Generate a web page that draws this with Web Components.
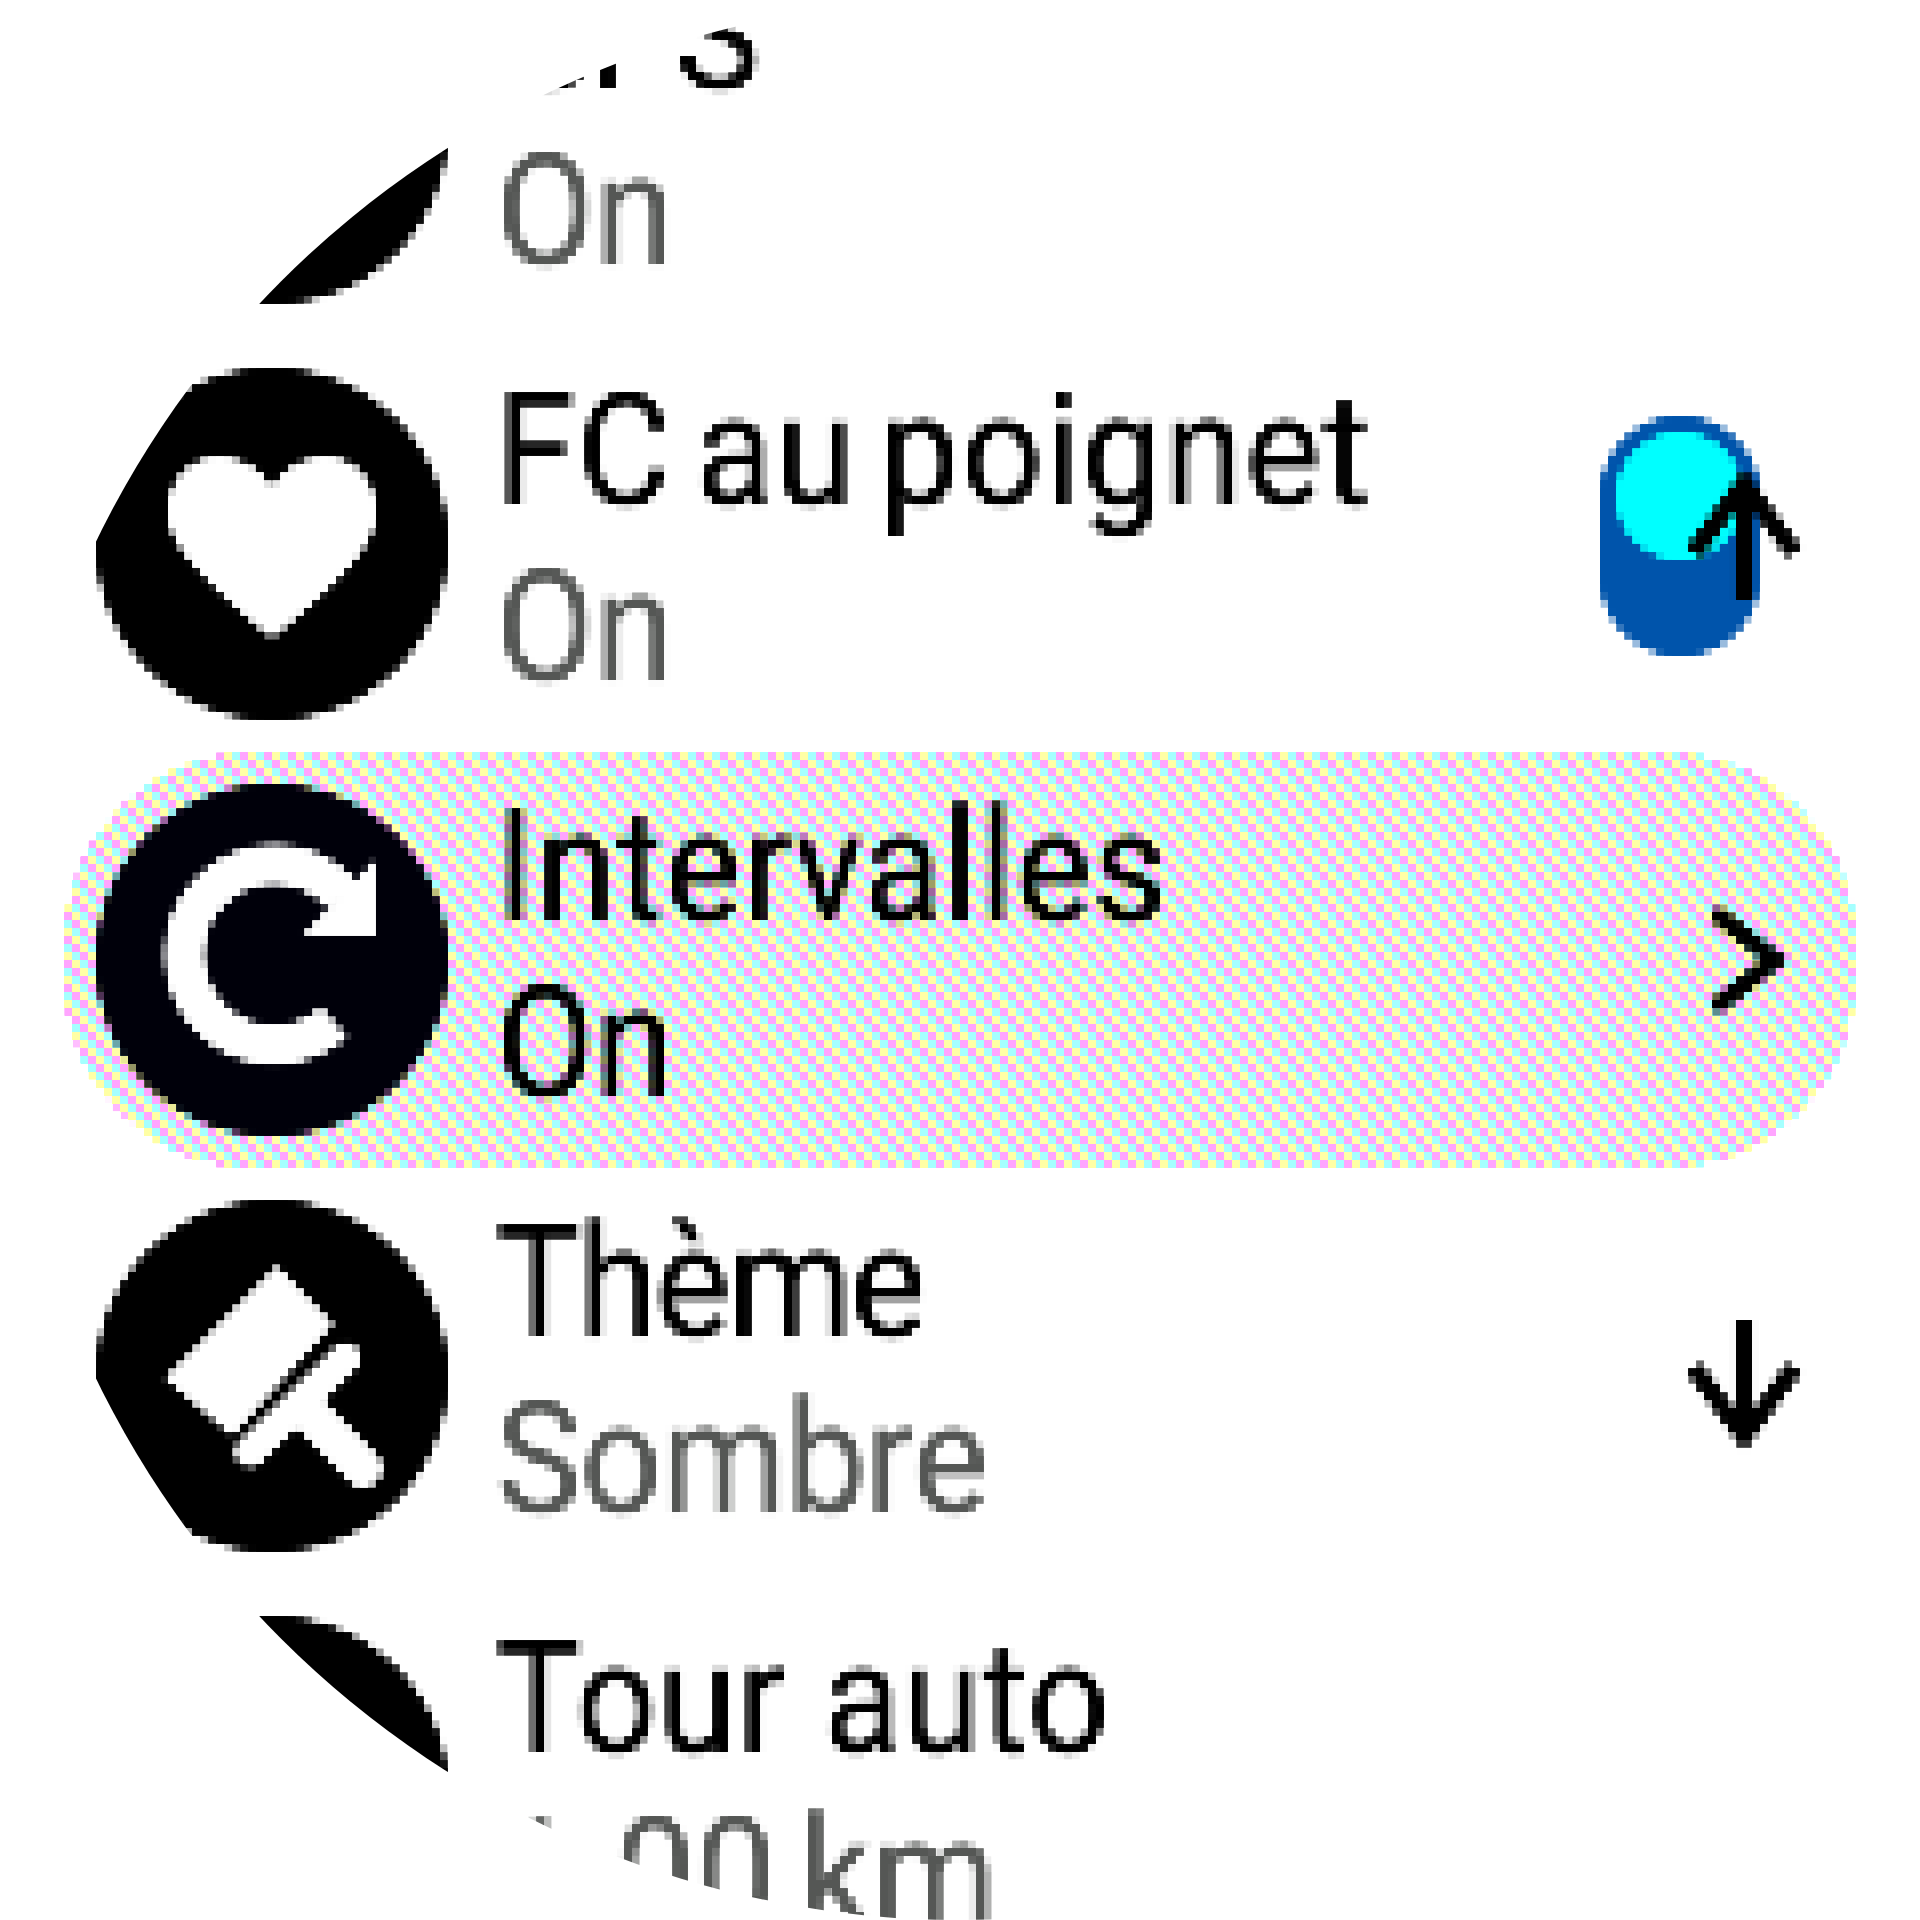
<!DOCTYPE html>
<html lang="fr">
<head>
<meta charset="utf-8">
<title>Réglages</title>
<style>
  html, body { margin: 0; background: #fff; }
</style>
</head>
<body>
<watch-screen>
  <setting-row title="GPS" sub="On" style="--title-track:-5px">
    <round-icon slot="icon"></round-icon>
  </setting-row>
  <setting-row title="FC au poignet" sub="On" style="--title-track:2px;--title-word:-16px">
    <round-icon slot="icon">
      <svg width="352" height="352" viewBox="96 368 352 352">
        <path d="M272 488C260 467 240 457 218 457C190 457 168 480 168 511C168 528 175 541 186 556C210 586 245 616 272 638C299 616 334 586 358 556C369 541 376 528 376 511C376 480 354 457 326 457C304 457 284 467 272 488Z" fill="#fff"/>
      </svg>
    </round-icon>
    <toggle-switch slot="trail"></toggle-switch>
  </setting-row>
  <setting-row title="Intervalles" sub="On" selected style="--title-track:1.4px">
    <round-icon slot="icon" style="--disc:#00000a">
      <svg width="352" height="352" viewBox="96 784 352 352">
        <path d="M334 1022A90 90 0 1 1 342 895" fill="none" stroke="#fff" stroke-width="40"/>
        <path d="M375 860V935H303Z" fill="#fff"/>
      </svg>
    </round-icon>
    <row-chevron slot="trail"></row-chevron>
  </setting-row>
  <setting-row title="Thème" sub="Sombre" style="--title-track:-3.5px;--sub-track:-1px">
    <round-icon slot="icon">
      <svg width="352" height="352" viewBox="96 1200 352 352">
        <path d="M277 1266L333 1324L232 1436L165 1378Z" fill="#fff"/>
        <path d="M345 1358L250 1452" fill="none" stroke="#fff" stroke-width="30" stroke-linecap="round"/>
        <path d="M310 1414L363 1468" fill="none" stroke="#fff" stroke-width="38" stroke-linecap="round"/>
      </svg>
    </round-icon>
  </setting-row>
  <setting-row title="Tour auto" sub="1.00 km" style="--title-track:.7px;--sub-word:-14px">
    <round-icon slot="icon"></round-icon>
  </setting-row>
</watch-screen>

<script>
// the display is 240x240 shown at 8x: sample every 8px so shapes come out blocky
const pixelFilters = `
  <svg width="0" height="0" style="position:absolute">
    <filter id="px" x="0" y="0" width="100%" height="100%" primitiveUnits="userSpaceOnUse" color-interpolation-filters="sRGB">
      <feGaussianBlur in="SourceGraphic" stdDeviation="1.8" result="soft"/>
      <feFlood x="3" y="3" width="2" height="2"/>
      <feComposite width="8" height="8"/>
      <feTile result="grid"/>
      <feComposite in="soft" in2="grid" operator="in"/>
      <feMorphology operator="dilate" radius="3"/>
    </filter>
    <filter id="px-hard" x="0" y="0" width="100%" height="100%" primitiveUnits="userSpaceOnUse" color-interpolation-filters="sRGB">
      <feFlood x="3" y="3" width="2" height="2"/>
      <feComposite width="8" height="8"/>
      <feTile result="grid"/>
      <feComposite in="SourceGraphic" in2="grid" operator="in"/>
      <feMorphology operator="dilate" radius="3"/>
    </filter>
  </svg>`;

// round watch display, the list is scrolled so the first row is cut by the bezel
const watchScreenTemplate = document.createElement("template");
watchScreenTemplate.innerHTML = `
  <style>
    :host {
      display: block;
      position: relative;
      width: 1920px;
      height: 1920px;
      overflow: hidden;
      border-radius: 50%;
      background: #fff;
      color: #000;
      font-family: Roboto, "Liberation Sans", sans-serif;
    }
    #list {
      display: flex;
      flex-direction: column;
      margin-top: -80px;
      padding: 0 64px;
    }
    .hint {
      position: absolute;
      left: 1680px;
      width: 128px;
      height: 144px;
      filter: url(#px);
    }
    #up { top: 464px; }
    #down { top: 1312px; }
    .hint path { fill: none; stroke: #000; stroke-width: 17; }
  </style>
  ${pixelFilters}
  <div id="list"><slot></slot></div>
  <svg class="hint" id="up" viewBox="0 0 128 144"><path d="M64 136V14M14 88L64 20L114 88"/></svg>
  <svg class="hint" id="down" viewBox="0 0 128 144"><path d="M64 8V130M14 56L64 124L114 56"/></svg>
`;
class WatchScreen extends HTMLElement {
  constructor() {
    super();
    this.attachShadow({ mode: "open" });
    this.shadowRoot.appendChild(watchScreenTemplate.content.cloneNode(true));
  }
}
customElements.define("watch-screen", WatchScreen);

const tile = "data:image/svg+xml," + encodeURIComponent(
  `<svg xmlns="http://www.w3.org/2000/svg" width="24" height="24" shape-rendering="crispEdges">
    <rect width="24" height="24" fill="#ffffa5"/>
    <path fill="#a5ffff" d="M8 0h8v8h-8zM16 8h8v8h-8zM0 16h8v8h-8z"/>
    <path fill="#ffa5ff" d="M16 0h8v8h-8zM0 8h8v8h-8zM8 16h8v8h-8z"/>
  </svg>`);

const settingRowTemplate = document.createElement("template");
settingRowTemplate.innerHTML = `
  <style>
    :host {
      display: block;
      height: 416px;
    }
    #back {
      height: 100%;
      border-radius: 192px;
    }
    :host([selected]) #back {
      background: url("${tile}") -64px -752px;
      filter: url(#px-hard);
    }
    #content {
      display: flex;
      align-items: center;
      height: 100%;
      margin-top: -416px;
      padding-left: 32px;
      filter: url(#px);
    }
    #text {
      flex: 1;
      min-width: 0;
      margin-left: 48px;
      padding-bottom: 10px;
      font-size: 156px;
      line-height: 176px;
      white-space: nowrap;
      transform: scaleX(.92);
      transform-origin: left;
    }
    #title {
      letter-spacing: var(--title-track, 0);
      word-spacing: var(--title-word, 0);
    }
    #sub {
      color: #555755;
      letter-spacing: var(--sub-track, 0);
      word-spacing: var(--sub-word, 0);
    }
    :host([selected]) #sub { color: #000; }
  </style>
  ${pixelFilters}
  <div id="back"></div>
  <div id="content">
    <slot name="icon"></slot>
    <div id="text"><div id="title"></div><div id="sub"></div></div>
    <slot name="trail"></slot>
  </div>
`;
class SettingRow extends HTMLElement {
  constructor() {
    super();
    this.attachShadow({ mode: "open" });
    this.shadowRoot.appendChild(settingRowTemplate.content.cloneNode(true));
  }
  connectedCallback() {
    this.shadowRoot.querySelector("#title").textContent = this.getAttribute("title");
    this.shadowRoot.querySelector("#sub").textContent = this.getAttribute("sub");
    this.removeAttribute("title");
  }
}
customElements.define("setting-row", SettingRow);

// black disc with the glyph svg passed in
const roundIconTemplate = document.createElement("template");
roundIconTemplate.innerHTML = `
  <style>
    :host {
      display: block;
      flex: none;
      width: 352px;
      height: 352px;
      border-radius: 50%;
      background: var(--disc, #000);
    }
    ::slotted(svg) { display: block; }
  </style>
  <slot></slot>
`;
class RoundIcon extends HTMLElement {
  constructor() {
    super();
    this.attachShadow({ mode: "open" });
    this.shadowRoot.appendChild(roundIconTemplate.content.cloneNode(true));
  }
}
customElements.define("round-icon", RoundIcon);

const toggleTemplate = document.createElement("template");
toggleTemplate.innerHTML = `
  <style>
    :host {
      display: flex;
      justify-content: center;
      box-sizing: border-box;
      width: 160px;
      height: 240px;
      margin: 0 96px 16px 0;
      padding-top: 16px;
      border-radius: 80px;
      background: #0054ab;
    }
    div {
      width: 128px;
      height: 128px;
      border-radius: 50%;
      background: #00ffff;
    }
  </style>
  <div></div>
`;
class ToggleSwitch extends HTMLElement {
  constructor() {
    super();
    this.attachShadow({ mode: "open" });
    this.shadowRoot.appendChild(toggleTemplate.content.cloneNode(true));
  }
}
customElements.define("toggle-switch", ToggleSwitch);

const chevronTemplate = document.createElement("template");
chevronTemplate.innerHTML = `
  <style>
    :host { display: block; width: 80px; height: 112px; margin-right: 64px; }
    svg { display: block; }
  </style>
  <svg width="80" height="112" viewBox="0 0 80 112">
    <path d="M2 8L63 56L2 104" fill="none" stroke="#000" stroke-width="16"/>
  </svg>
`;
class RowChevron extends HTMLElement {
  constructor() {
    super();
    this.attachShadow({ mode: "open" });
    this.shadowRoot.appendChild(chevronTemplate.content.cloneNode(true));
  }
}
customElements.define("row-chevron", RowChevron);
</script>
</body>
</html>
